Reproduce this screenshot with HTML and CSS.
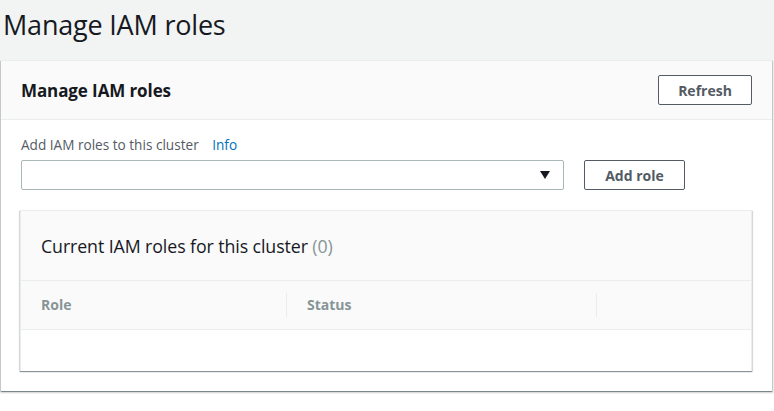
FILE: index.html
```html
<!DOCTYPE html>
<html>
<head>
<meta charset="utf-8">
<link rel="stylesheet" href="styles.css">
</head>
<body>
<div class="page">
  <h1 class="page-title">Manage IAM roles</h1>
  <div class="card">
    <div class="card-header">
      <h2 class="card-title">Manage IAM roles</h2>
      <button class="btn">Refresh</button>
    </div>
    <div class="card-body">
      <div class="field-label">Add IAM roles to this cluster <a class="info">Info</a></div>
      <div class="field-row">
        <div class="select"><span class="caret"></span></div>
        <button class="btn btn-add">Add role</button>
      </div>
      <div class="table">
        <div class="table-header">
          <h3 class="table-title">Current IAM roles for this cluster <span class="count">(0)</span></h3>
        </div>
        <div class="thead">
          <div class="th th-role">Role</div>
          <div class="th th-status">Status</div>
          <div class="th th-last"></div>
        </div>
        <div class="tbody"></div>
      </div>
    </div>
  </div>
</div>
</body>
</html>
```
FILE: styles.css
```css
html, body {
  margin: 0;
  padding: 0;
  background: #ffffff;
  font-family: "Open Sans", "Noto Sans", Arial, sans-serif;
  color: #16191f;
}
.page {
  background: #f2f3f3;
  padding: 0 2px 3px 1px;
}
.page-title {
  margin: 0;
  padding: 7px 0 0 2px;
  height: 60px;
  box-sizing: border-box;
  font-size: 27px;
  font-weight: 400;
  line-height: 36px;
  color: #16191f;
  letter-spacing: -0.2px;
}
.card {
  background: #ffffff;
  border-top: 1px solid #eaeded;
  box-shadow: 0 1px 1px 0 rgba(0, 28, 36, 0.3), 1px 1px 1px 0 rgba(0, 28, 36, 0.15), -1px 1px 1px 0 rgba(0, 28, 36, 0.15);
}
.card-header {
  background: #fafafa;
  border-bottom: 1px solid #eaeded;
  height: 58px;
  display: flex;
  align-items: center;
  justify-content: space-between;
  padding: 0 20px 0 20px;
}
.card-title {
  margin: 0;
  font-size: 17px;
  font-weight: 700;
  color: #16191f;
  letter-spacing: -0.1px;
}
.btn {
  font-family: inherit;
  font-size: 14px;
  font-weight: 700;
  color: #545b64;
  background: #ffffff;
  border: 1px solid #545b64;
  border-radius: 2px;
  height: 30px;
  width: 94px;
  padding: 0;
  cursor: pointer;
}
.card-body {
  padding: 16px 20px 20px 19px;
}
.field-label {
  font-size: 13.6px;
  color: #545b64;
  line-height: 18px;
  height: 19px;
  padding-left: 1px;
}
.info {
  color: #0073bb;
  margin-left: 10px;
}
.field-row {
  display: flex;
  align-items: center;
  gap: 20px;
  margin-top: 5px;
  padding-left: 1px;
}
.select {
  width: 543px;
  height: 30px;
  border: 1px solid #aab7b8;
  border-radius: 2px;
  background: #fff;
  display: flex;
  align-items: center;
  justify-content: flex-end;
  padding-right: 13px;
  box-sizing: border-box;
}
.caret {
  width: 0;
  height: 0;
  border-left: 5.5px solid transparent;
  border-right: 5.5px solid transparent;
  border-top: 8px solid #16191f;
}
.btn-add {
  width: 101px;
}
.table {
  margin-top: 20px;
  border-top: 1px solid #eaeded;
  border-left: 1px solid #eaeded;
  border-right: 1px solid #eaeded;
  background: #fafafa;
  box-shadow: 0 1px 1px 0 rgba(0, 28, 36, 0.3), 1px 1px 1px 0 rgba(0, 28, 36, 0.12), -1px 1px 1px 0 rgba(0, 28, 36, 0.12);
}
.table-header {
  height: 69px;
  display: flex;
  align-items: center;
  padding-left: 20px;
  border-bottom: 1px solid #eaeded;
}
.table-title {
  margin: 0;
  font-size: 17.8px;
  font-weight: 400;
  color: #16191f;
  letter-spacing: -0.1px;
}
.count {
  color: #879596;
}
.thead {
  display: flex;
  height: 48px;
  align-items: center;
  border-bottom: 1px solid #eaeded;
}
.th {
  font-size: 14px;
  font-weight: 700;
  color: #879596;
  padding-left: 20px;
  height: 24px;
  line-height: 24px;
  box-sizing: border-box;
}
.th-role {
  width: 266px;
  border-right: 1px solid #eaeded;
}
.th-status {
  width: 310px;
  border-right: 1px solid #eaeded;
}
.th-last {
  flex: 1;
}
.tbody {
  height: 41px;
  background: #ffffff;
}
```
